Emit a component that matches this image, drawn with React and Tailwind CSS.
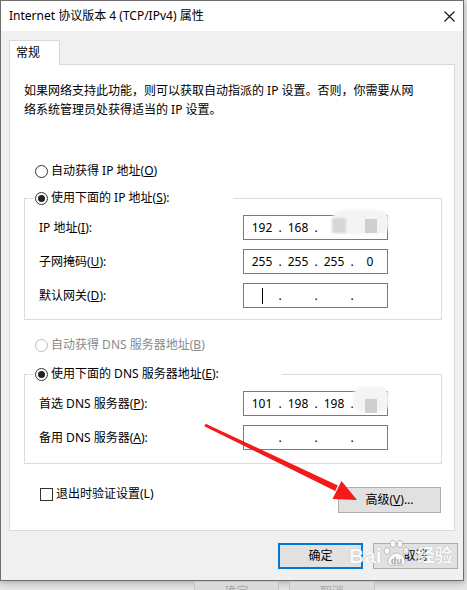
import React from "react";

const Radio = ({ checked, disabled, children }) => (
  <div className="flex items-center h-[16px] leading-[16px]">
    <span
      className={`w-[13px] h-[13px] rounded-full border bg-white flex items-center justify-center ${
        disabled ? "border-[#bcbcbc]" : "border-[#333333]"
      }`}
    >
      {checked && <span className="w-[7px] h-[7px] rounded-full bg-[#222222]" />}
    </span>
    <span className={`ml-[3px] ${disabled ? "text-[#8a8a8a]" : "text-black"}`}>{children}</span>
  </div>
);

// IP address box with four octets
const IpBox = ({ parts = ["", "", "", ""], cursor, children }) => (
  <div className="relative w-[145px] h-[25px] border border-[#7a7a7a] bg-white flex items-center pl-[5px] leading-[16px]">
    {parts.map((p, i) => (
      <React.Fragment key={i}>
        <span className="w-[26px] text-center flex justify-center">
          {cursor && i === 0 ? <span className="inline-block w-px h-[16px] bg-black" /> : p}
        </span>
        {i < 3 && <span className="w-[10px] text-center">.</span>}
      </React.Fragment>
    ))}
    {children}
  </div>
);

const Field = ({ label, children }) => (
  <div className="flex items-center h-[25px] pl-[14px]">
    <span className="w-[204px] leading-[16px]">{label}</span>
    {children}
  </div>
);

const App = () => {
  return (
    <div className="relative w-[467px] h-[590px] overflow-hidden bg-[#e4e4e4] text-[12px] text-black font-['Noto_Sans','Noto_Sans_CJK_SC',sans-serif]">
      {/* dialog window */}
      <div className="w-[464px] h-[581px] border border-[#6e6e6e] bg-[#f0f0f0] flex flex-col shadow-[0_2px_6px_rgba(0,0,0,0.25)]">
        {/* title bar */}
        <div className="h-[30px] bg-white flex items-center justify-between pl-[8px] pr-[8px]">
          <span className="leading-[16px]">Internet 协议版本 4 (TCP/IPv4) 属性</span>
          <svg width="11" height="11" viewBox="0 0 11 11">
            <path d="M0.5 0.5 L10.5 10.5 M10.5 0.5 L0.5 10.5" stroke="#111" strokeWidth="1.1" fill="none" />
          </svg>
        </div>

        <div className="flex-1 px-[8px] pt-[9px]">
          {/* tab */}
          <div className="relative z-10 -mb-px w-[51px] h-[25px] bg-white border border-b-0 border-[#d9d9d9] pl-[6px] flex items-center leading-[16px]">
            常规
          </div>

          {/* tab panel */}
          <div className="h-[467px] bg-white border border-[#d9d9d9] pl-[14px] pr-[12px] pt-[16px]">
            <p className="leading-[19px]">
              如果网络支持此功能，则可以获取自动指派的 IP 设置。否则，你需要从网
              <br />
              络系统管理员处获得适当的 IP 设置。
            </p>

            <div className="mt-[44px] ml-[11px]">
              <Radio>
                自动获得 IP 地址(<u>O</u>)
              </Radio>
            </div>

            <div className="mt-[19px] border border-[#dcdcdc] pb-[11px]">
              <div className="-mt-[9px] ml-[8px] pl-[2px] w-[200px] bg-white">
                <Radio checked>
                  使用下面的 IP 地址(<u>S</u>):
                </Radio>
              </div>
              <div className="mt-[9px] flex flex-col gap-[9px]">
                <Field
                  label={
                    <>
                      IP 地址(<u>I</u>):
                    </>
                  }
                >
                  <IpBox parts={["192", "168", "", ""]}>
                    <div className="absolute left-[88px] -top-[6px] w-[57px] h-[24px] rounded-[10px] bg-[#f4f4f4] blur-[1px]" />
                    <div className="absolute left-[88px] top-[2px] w-[14px] h-[15px] bg-[#d6d6d6] blur-[1px]" />
                    <div className="absolute left-[121px] top-[3px] w-[12px] h-[14px] bg-[#cfcfcf] blur-[0.5px]" />
                  </IpBox>
                </Field>
                <Field
                  label={
                    <>
                      子网掩码(<u>U</u>):
                    </>
                  }
                >
                  <IpBox parts={["255", "255", "255", "0"]} />
                </Field>
                <Field
                  label={
                    <>
                      默认网关(<u>D</u>):
                    </>
                  }
                >
                  <IpBox cursor />
                </Field>
              </div>
            </div>

            <div className="mt-[17px] ml-[11px]">
              <Radio disabled>
                自动获得 DNS 服务器地址(<u>B</u>)
              </Radio>
            </div>

            <div className="mt-[21px] border border-[#dcdcdc] pb-[13px]">
              <div className="-mt-[9px] ml-[8px] pl-[2px] w-[249px] bg-white">
                <Radio checked>
                  使用下面的 DNS 服务器地址(<u>E</u>):
                </Radio>
              </div>
              <div className="mt-[9px] flex flex-col gap-[9px]">
                <Field
                  label={
                    <>
                      首选 DNS 服务器(<u>P</u>):
                    </>
                  }
                >
                  <IpBox parts={["101", "198", "198", ""]}>
                    <div className="absolute left-[109px] -top-[5px] w-[36px] h-[25px] rounded-[9px] bg-[#f4f4f4] blur-[1px]" />
                    <div className="absolute left-[121px] top-[7px] w-[12px] h-[14px] bg-[#cfcfcf] blur-[0.5px]" />
                  </IpBox>
                </Field>
                <Field
                  label={
                    <>
                      备用 DNS 服务器(<u>A</u>):
                    </>
                  }
                >
                  <IpBox />
                </Field>
              </div>
            </div>

            <div className="mt-[23px] flex items-start justify-between pr-[1px]">
              <div className="ml-[16px] -mt-px flex items-center h-[16px] leading-[16px]">
                <span className="w-[13px] h-[13px] border border-[#333333] bg-white" />
                <span className="ml-[3px]">退出时验证设置(L)</span>
              </div>
              <button className="w-[103px] h-[26px] bg-[#e1e1e1] border border-[#adadad] leading-[16px]">
                高级(<u>V</u>)...
              </button>
            </div>
          </div>

          {/* dialog buttons */}
          <div className="mt-[12px] -mr-[3px] flex justify-end gap-[10px]">
            <button className="w-[85px] h-[26px] bg-[#e1e1e1] border-2 border-[#0078d7] leading-[16px]">确定</button>
            <button className="w-[85px] h-[26px] bg-[#e1e1e1] border border-[#adadad] leading-[16px]">取消</button>
          </div>
        </div>
      </div>

      {/* window behind */}
      <div className="flex gap-[10px] pl-[194px]">
        <div className="w-[85px] h-[24px] bg-[#dadada] border border-[#c6c6c6] text-center text-[#a8a8a8] pt-[2px] leading-[16px]">确定</div>
        <div className="w-[86px] h-[24px] bg-[#dadada] border border-[#c6c6c6] text-center text-[#a8a8a8] pt-[2px] leading-[16px]">取消</div>
      </div>

      {/* red arrow annotation */}
      <svg className="absolute left-0 top-0 pointer-events-none" width="467" height="590" viewBox="0 0 467 590">
        <polygon points="204.3,426.3 205.7,423.7 337.8,485.6 335.2,491" fill="#f21a1a" />
        <polygon points="357,500 332.5,499 341.5,481" fill="#f21a1a" />
      </svg>

      {/* baidu watermark */}
      <div className="absolute left-[349px] top-[540px] flex items-end gap-[1px] text-white opacity-85 font-bold text-[21px] leading-[22px] pointer-events-none [text-shadow:0_0_1px_#8c8c8c] font-['Liberation_Sans','Noto_Sans_CJK_SC',sans-serif]">
        <span>Bai</span>
        <svg width="27" height="27" viewBox="0 0 27 27">
          <g fill="#ffffff" stroke="#a5a5a5" strokeWidth="0.8">
            <ellipse cx="4" cy="11" rx="3" ry="3.5" />
            <ellipse cx="10" cy="4" rx="3" ry="3.5" />
            <ellipse cx="17" cy="4" rx="3" ry="3.5" />
            <ellipse cx="23" cy="11" rx="3" ry="3.5" />
            <path d="M13.5 13 C8 13 4 19 5 23 C6 26 10 25 13.5 25 C17 25 21 26 22 23 C23 19 19 13 13.5 13 Z" />
          </g>
          <text x="13.5" y="24" textAnchor="middle" fontSize="9" fontWeight="bold" fill="#b0b0b0" fontFamily="Liberation Sans, sans-serif">
            du
          </text>
        </svg>
        <span className="ml-[6px] text-[18px]">经验</span>
      </div>
    </div>
  );
};

export default App;
